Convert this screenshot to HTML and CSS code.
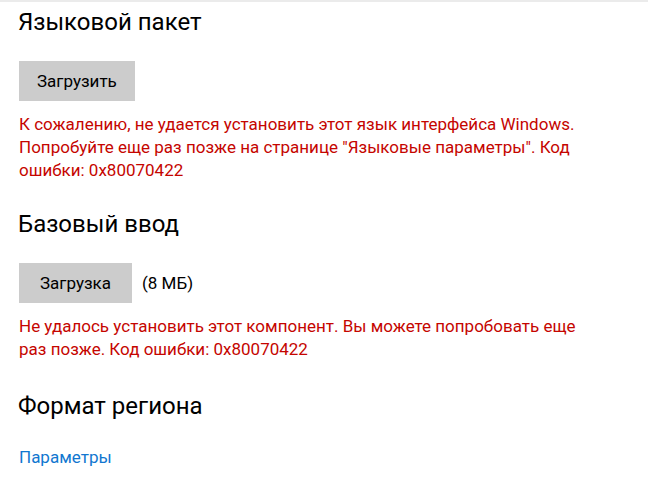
FILE: index.html
```html
<!DOCTYPE html>
<html lang="ru">
<head>
<meta charset="utf-8">
<title>Язык</title>
<link rel="stylesheet" href="styles.css">
</head>
<body>
<main class="page">
  <section class="group">
    <h2 class="title">Языковой пакет</h2>
    <div class="actions">
      <button class="btn" type="button">Загрузить</button>
    </div>
    <p class="error">К сожалению, не удается установить этот язык интерфейса Windows. Попробуйте еще раз позже на странице "Языковые параметры". Код ошибки: 0x80070422</p>
  </section>
  <section class="group group-second">
    <h2 class="title">Базовый ввод</h2>
    <div class="actions">
      <button class="btn btn-narrow" type="button">Загрузка</button>
      <span class="size">(8 МБ)</span>
    </div>
    <p class="error">Не удалось установить этот компонент. Вы можете попробовать еще раз позже. Код ошибки: 0x80070422</p>
  </section>
  <section class="group group-third">
    <h2 class="title">Формат региона</h2>
    <a class="link" href="#">Параметры</a>
  </section>
</main>
</body>
</html>
```

FILE: styles.css
```css
html, body {
  margin: 0;
  padding: 0;
  background: #ffffff;
}

body {
  font-family: Roboto, "Noto Sans", "Liberation Sans", sans-serif;
  color: #000000;
  border-top: 2px solid #ebebeb;
}

.page {
  padding: 4px 0 0 19px;
}

.group {
  display: flex;
  flex-direction: column;
  align-items: flex-start;
}

.group-second {
  margin-top: 26px;
}

.group-third {
  margin-top: 29px;
}

.title {
  margin: 0;
  font-size: 24px;
  line-height: 32px;
  font-weight: 400;
  margin-left: -1px;
}

.actions {
  display: flex;
  align-items: center;
  gap: 10px;
  margin-top: 23px;
}

.btn {
  min-width: 114px;
  height: 40px;
  padding: 0 18px;
  border: none;
  background: #cccccc;
  color: #000000;
  font-family: inherit;
  font-size: 17px;
  text-align: center;
}

.btn-narrow {
  min-width: 113px;
}

.size {
  font-size: 17px;
}

.error {
  margin: 12px 0 0;
  max-width: 570px;
  color: #c50500;
  font-size: 17px;
  line-height: 23px;
}

.link {
  margin-top: 24px;
  color: #1177d0;
  text-decoration: none;
  font-size: 17px;
  line-height: 23px;
}
```
